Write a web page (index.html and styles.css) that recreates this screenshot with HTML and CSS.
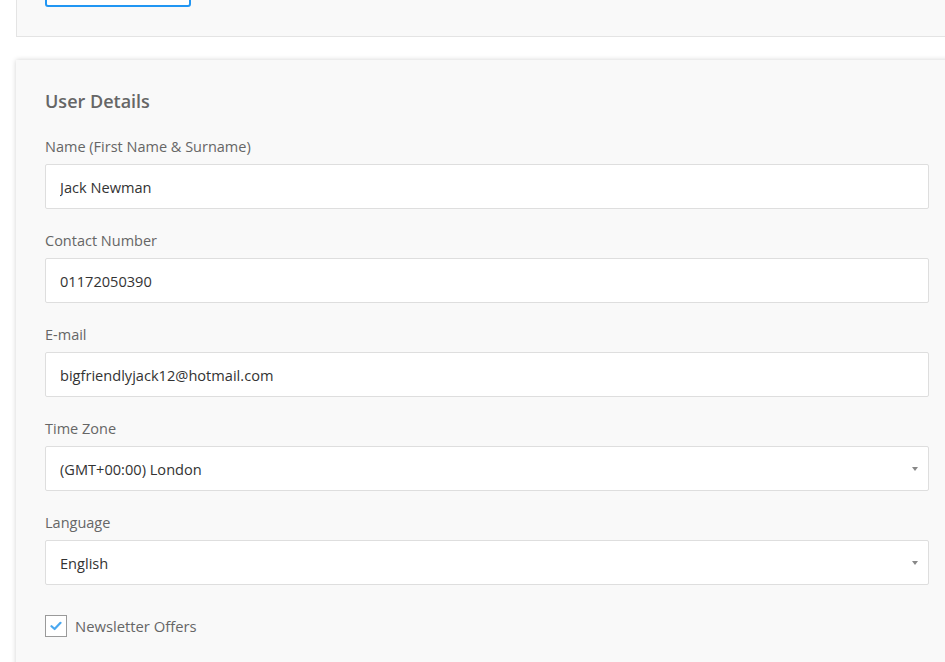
FILE: index.html
```html
<!DOCTYPE html>
<html>
<head>
    <meta charset="UTF-8">
    <title>Account - user details</title>
    <link rel="stylesheet" href="styles.css">
</head>
<body>
    <div class="page">
        <div class="panel panel-top">
            <button type="button" class="btn-outline"></button>
        </div>

        <div class="panel panel-details">
            <h2>User Details</h2>

            <div class="field">
                <label for="name">Name (First Name &amp; Surname)</label>
                <input type="text" id="name" value="Jack Newman">
            </div>

            <div class="field">
                <label for="phone">Contact Number</label>
                <input type="text" id="phone" value="01172050390">
            </div>

            <div class="field">
                <label for="email">E-mail</label>
                <input type="text" id="email" value="bigfriendlyjack12@hotmail.com">
            </div>

            <div class="field">
                <label for="tz">Time Zone</label>
                <div class="select-wrap">
                    <select id="tz">
                        <option>(GMT+00:00) London</option>
                    </select>
                </div>
            </div>

            <div class="field">
                <label for="lang">Language</label>
                <div class="select-wrap">
                    <select id="lang">
                        <option>English</option>
                    </select>
                </div>
            </div>

            <label class="check">
                <span class="box">
                    <svg width="12" height="10" viewBox="0 0 12 10">
                        <path d="M1.5 5.2 L4.6 8 L10.5 1.8" fill="none" stroke="#4aa8f0" stroke-width="2.2" stroke-linecap="round" stroke-linejoin="round"/>
                    </svg>
                </span>
                Newsletter Offers
            </label>
        </div>
    </div>
</body>
</html>
```

FILE: styles.css
```css
* {
    margin: 0;
    padding: 0;
    box-sizing: border-box;
}

body {
    background: #fff;
    font-family: "Open Sans", "Noto Sans", sans-serif;
    color: #666;
    overflow: hidden;
}

.page {
    padding-left: 16px;
    width: 975px;
}

.panel {
    background: #f9f9f9;
    width: 942px;
}

.panel-top {
    margin-top: -33px;
    padding: 0 29px 29px 29px;
    border-left: 1px solid #e4e4e4;
    border-bottom: 1px solid #e4e4e4;
}

.btn-outline {
    display: block;
    width: 146px;
    height: 40px;
    margin-left: -1px;
    background: #fff;
    border: 2px solid #2196f3;
    border-radius: 3px;
}

.panel-details {
    margin-top: 23px;
    padding: 29px 29px 40px 29px;
    box-shadow: 0 0 5px rgba(0, 0, 0, 0.18);
}

.panel-details h2 {
    font-size: 18px;
    font-weight: 600;
    line-height: 24px;
    color: #666;
    margin-bottom: 24px;
}

.field {
    margin-bottom: 22px;
}

.field label {
    display: block;
    font-size: 14.5px;
    line-height: 20px;
    margin-bottom: 7px;
}

.field input,
.field select {
    display: block;
    width: 884px;
    height: 45px;
    padding: 0 14px;
    background: #fff;
    border: 1px solid #dedede;
    border-radius: 2px;
    font-family: "Open Sans", "Noto Sans", sans-serif;
    font-size: 14.6px;
    color: #333;
    outline: none;
    appearance: none;
    -webkit-appearance: none;
}

.select-wrap {
    position: relative;
    width: 884px;
}

.select-wrap::after {
    content: '';
    position: absolute;
    right: 11px;
    top: 21px;
    border-left: 3px solid transparent;
    border-right: 3px solid transparent;
    border-top: 4px solid #888;
}

.check {
    display: flex;
    align-items: center;
    gap: 8px;
    margin-top: 30px;
    font-size: 14.8px;
    line-height: 20px;
    color: #666;
}

.check .box {
    width: 22px;
    height: 22px;
    border: 1px solid #9a9a9a;
    background: #fff;
    display: flex;
    align-items: center;
    justify-content: center;
}
```
